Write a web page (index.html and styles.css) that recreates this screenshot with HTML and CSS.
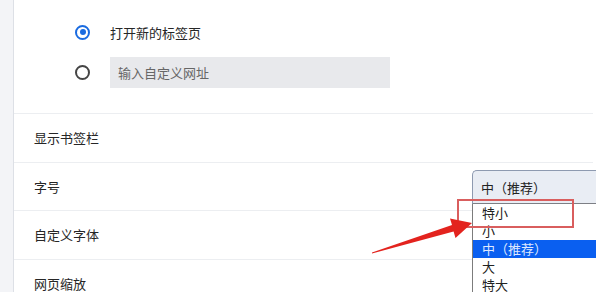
FILE: index.html
```html
<!DOCTYPE html>
<html lang="zh-CN">
<head>
<meta charset="utf-8">
<link rel="stylesheet" href="styles.css">
</head>
<body>
<div class="page">
  <div class="rail"></div>
  <div class="main">
    <div class="radios">
      <div class="radio-row">
        <span class="radio checked"></span>
        <span class="radio-label">打开新的标签页</span>
      </div>
      <div class="radio-row">
        <span class="radio"></span>
        <span class="url-input">输入自定义网址</span>
      </div>
    </div>
    <div class="row">显示书签栏</div>
    <div class="row row-select">
      <span>字号</span>
      <div class="select">中（推荐）</div>
    </div>
    <div class="row">自定义字体</div>
    <div class="row">网页缩放</div>

    <ul class="dropdown">
      <li>特小</li>
      <li>小</li>
      <li class="active">中（推荐）</li>
      <li>大</li>
      <li>特大</li>
    </ul>
  </div>
  <div class="mark-box"></div>
  <svg class="arrow" width="615" height="292" viewBox="0 0 615 292">
    <polygon points="372,252.5 452,225 450,218.5 472,223 455.5,238 453.6,231.5 372,253.5" fill="#e3231e"/>
  </svg>
</div>
</body>
</html>
```
FILE: styles.css
```css
* { box-sizing: border-box; margin: 0; padding: 0; }
html, body { width: 615px; height: 292px; overflow: hidden; background: #fff; }
body {
  font-family: "Noto Sans CJK SC", "Noto Sans", sans-serif;
  font-size: 13px;
  color: #262626;
}
.page { position: relative; display: flex; width: 615px; height: 292px; }
.rail {
  width: 14px;
  flex: none;
  background: #f3f4f7;
  border-right: 1px solid #dde0e6;
}
.main {
  position: relative;
  width: 582px;
  flex: none;
  overflow: hidden;
}
.radios {
  padding: 16.5px 0 0 61px;
  height: 114px;
  border-bottom: 1px solid #eceef1;
  margin-right: 3px;
  display: flex;
  flex-direction: column;
  gap: 9px;
}
.radio-row { display: flex; align-items: center; height: 31px; gap: 20px; }
.radio {
  width: 15px; height: 15px;
  border-radius: 50%;
  border: 2px solid #454545;
  flex: none;
  position: relative;
}
.radio.checked { border-color: #1a6be0; }
.radio.checked::after {
  content: "";
  position: absolute;
  left: 2.5px; top: 2.5px;
  width: 6px; height: 6px;
  border-radius: 50%;
  background: #1a6be0;
}
.radio-label { color: #262626; }
.url-input {
  width: 280px; height: 31px;
  background: #e8e9ec;
  color: #666;
  padding-left: 8px;
  display: flex; align-items: center;
}
.row {
  height: 48.5px;
  padding-left: 20px;
  display: flex;
  align-items: center;
  border-bottom: 1px solid #eceef1;
  margin-right: 3px;
  color: #262626;
}
.row-select { position: relative; justify-content: space-between; margin-right: 0; border-bottom: none; }
.row-select::after {
  content: "";
  position: absolute; left: 0; right: 3px; bottom: 0;
  border-bottom: 1px solid #eceef1;
}
.select {
  width: 124px;
  height: 34px;
  align-self: flex-end;
  margin-bottom: 7px;
  background: #e9edf4;
  border: 1px solid #8e9ab0;
  border-right: none;
  border-bottom: 1px solid #7d7f85;
  border-radius: 5px 0 0 0;
  padding-left: 8px;
  display: flex; align-items: center;
  color: #222;
}
.dropdown {
  position: absolute;
  left: 458px;
  top: 204px;
  width: 124px;
  list-style: none;
  background: #fff;
  border-left: 1px solid #7c7c7c;
}
.dropdown li {
  height: 18px;
  line-height: 18px;
  padding-left: 9px;
  color: #222;
}
.dropdown li.active { background: #0a5ff0; color: #dfe9ff; }
.mark-box {
  position: absolute;
  left: 457px; top: 199px;
  width: 117px; height: 29px;
  border: 2px solid #d95e5e;
}
.arrow { position: absolute; left: 0; top: 0; pointer-events: none; }
```
